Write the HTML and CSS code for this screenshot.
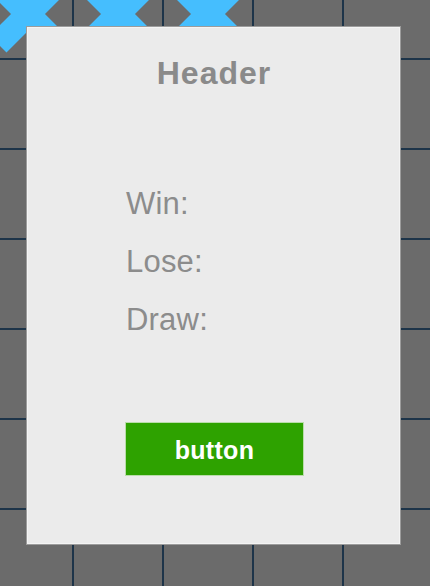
FILE: index.html
```html
<!DOCTYPE html>
<html>
<head>
<meta charset="utf-8">
<link rel="stylesheet" href="styles.css">
</head>
<body>
<div class="board">
  <div class="cell"><svg class="mark" viewBox="0 0 88 88"><path d="M14 14L74 74M74 14L14 74"/></svg></div>
  <div class="cell"><svg class="mark" viewBox="0 0 88 88"><path d="M14 14L74 74M74 14L14 74"/></svg></div>
  <div class="cell"><svg class="mark" viewBox="0 0 88 88"><path d="M14 14L74 74M74 14L14 74"/></svg></div>
  <div class="cell"></div><div class="cell"></div>
  <div class="cell"></div><div class="cell"></div><div class="cell"></div><div class="cell"></div><div class="cell"></div>
  <div class="cell"></div><div class="cell"></div><div class="cell"></div><div class="cell"></div><div class="cell"></div>
  <div class="cell"></div><div class="cell"></div><div class="cell"></div><div class="cell"></div><div class="cell"></div>
  <div class="cell"></div><div class="cell"></div><div class="cell"></div><div class="cell"></div><div class="cell"></div>
  <div class="cell"></div><div class="cell"></div><div class="cell"></div><div class="cell"></div><div class="cell"></div>
  <div class="cell"></div><div class="cell"></div><div class="cell"></div><div class="cell"></div><div class="cell"></div>
</div>
<div class="panel">
  <h1 class="header">Header</h1>
  <div class="body">
    <div class="stats">
      <div class="stat">Win:</div>
      <div class="stat">Lose:</div>
      <div class="stat">Draw:</div>
    </div>
    <button class="btn">button</button>
  </div>
</div>
</body>
</html>
```
FILE: styles.css
```css
html, body {
  margin: 0;
  padding: 0;
  width: 430px;
  height: 586px;
  overflow: hidden;
  background: #6b6b6b;
  font-family: "Liberation Sans", Arial, sans-serif;
}
.board {
  display: grid;
  grid-template-columns: repeat(5, 88px);
  grid-auto-rows: 88px;
  gap: 2px;
  margin-left: -16px;
  margin-top: -30px;
  width: 458px;
  background: #1d3449;
}
.cell {
  background: #6b6b6b;
  display: flex;
}
.mark {
  width: 88px;
  height: 88px;
}
.mark path {
  stroke: #45befe;
  stroke-width: 24;
  fill: none;
  stroke-linecap: butt;
}
.panel {
  position: absolute;
  left: 27px;
  top: 27px;
  width: 371px;
  height: 515px;
  background: #ebebeb;
  border: 1px solid #f4f4f4;
  box-shadow: 0 0 0 1px #9c9c9c;
}
.header {
  margin: 0;
  padding-top: 30px;
  text-align: center;
  font-size: 32px;
  line-height: 30px;
  font-weight: bold;
  letter-spacing: 1px;
  color: #8a8a8a;
  padding-left: 1px;
}
.body {
  padding-left: 97px;
  display: flex;
  flex-direction: column;
  align-items: flex-start;
}
.stats {
  margin-top: 87px;
  padding-left: 1px;
  display: flex;
  flex-direction: column;
}
.stat {
  font-size: 31px;
  line-height: 58px;
  letter-spacing: 0.2px;
  color: #8c8c8c;
}
.btn {
  margin-top: 73px;
  width: 179px;
  box-sizing: border-box;
  padding: 2px 0 0 0;
  line-height: 50px;
  height: 54px;
  background: #2ea200;
  border: 1px solid #b9dcaa;
  color: #ffffff;
  font-family: "Liberation Sans", Arial, sans-serif;
  font-weight: bold;
  font-size: 25px;
  letter-spacing: 0.3px;
}
```
